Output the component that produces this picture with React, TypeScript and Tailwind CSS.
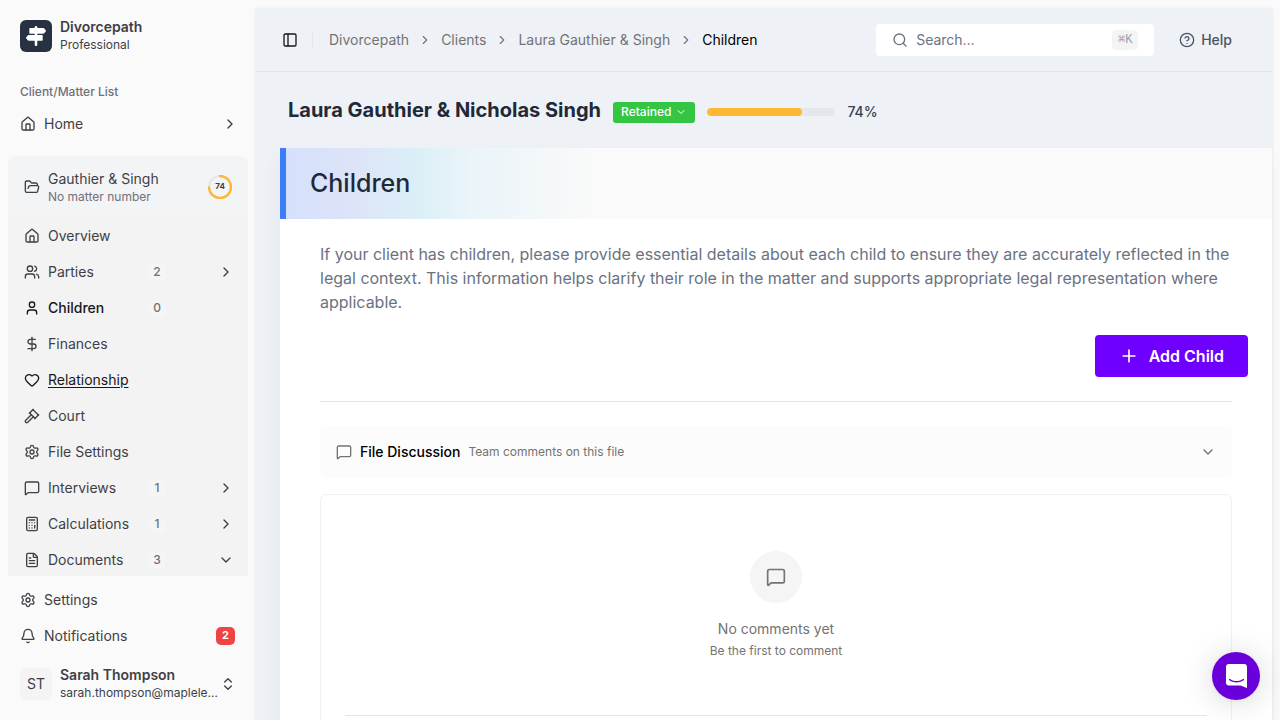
import type { ReactNode } from "react";
import {
  Bell,
  Calculator,
  ChevronDown,
  ChevronRight,
  ChevronsUpDown,
  CircleHelp,
  DollarSign,
  FileText,
  FolderOpen,
  Gavel,
  Heart,
  House,
  MessageSquare,
  PanelLeft,
  Plus,
  Search,
  Settings,
  User,
  Users,
  type LucideIcon,
} from "lucide-react";

type MatterItem = {
  label: string;
  icon: LucideIcon;
  count?: number;
  chevron?: "right" | "down";
  tone?: string;
};

const matterItems: MatterItem[] = [
  { label: "Overview", icon: House },
  { label: "Parties", icon: Users, count: 2, chevron: "right" },
  { label: "Children", icon: User, count: 0, tone: "font-medium text-zinc-900" },
  { label: "Finances", icon: DollarSign },
  { label: "Relationship", icon: Heart, tone: "text-zinc-900 underline underline-offset-2" },
  { label: "Court", icon: Gavel },
  { label: "File Settings", icon: Settings },
  { label: "Interviews", icon: MessageSquare, count: 1, chevron: "right" },
  { label: "Calculations", icon: Calculator, count: 1, chevron: "right" },
  { label: "Documents", icon: FileText, count: 3, chevron: "down" },
];

function SignpostLogo() {
  return (
    <svg viewBox="0 0 20 20" className="size-5" fill="#fff" aria-hidden="true">
      <rect x="8.7" y="0" width="2.6" height="20" rx="1.3" />
      <path d="M4.3 2h12.9c.4 0 .7.1 1 .4l1.5 1.8c.3.4.3.9 0 1.3l-1.5 1.8c-.3.3-.6.5-1 .5H4.3c-.6 0-1-.4-1-1V3c0-.6.4-1 1-1z" />
      <path d="M15.7 9H2.8c-.4 0-.7.1-1 .4L.3 11.200c-.3.4-.3.9 0 1.300l1.500 1.800c.3.3.6.5 1 .5h12.900c.6 0 1-.4 1-1V10c0-.6-.4-1-1-1z" />
    </svg>
  );
}

function MatterLink({ item }: { item: MatterItem }) {
  const Icon = item.icon;
  const Chevron = item.chevron === "down" ? ChevronDown : ChevronRight;
  return (
    <li>
      <a
        href="#"
        className={`flex h-9 items-center gap-2 pr-3.5 pl-4 text-sm ${item.tone ?? "text-zinc-700"}`}
      >
        <Icon className="size-4 shrink-0" />
        <span className="w-[91px] shrink-0 whitespace-nowrap">{item.label}</span>
        {item.count !== undefined && (
          <span className="flex h-[19px] w-5 items-center justify-center rounded-md border border-[#f1f2f8] bg-[#f5f5f5] text-xs font-medium text-zinc-500">
            {item.count}
          </span>
        )}
        {item.chevron && <Chevron className="ml-auto size-4" />}
      </a>
    </li>
  );
}

function ProgressRing({ value }: { value: number }) {
  const length = 2 * Math.PI * 11;
  return (
    <svg viewBox="0 0 24 24" className="size-6" role="img" aria-label={`${value}% complete`}>
      <circle cx="12" cy="12" r="11" fill="none" stroke="#e5e7eb" strokeWidth="2" />
      <circle
        cx="12"
        cy="12"
        r="11"
        fill="none"
        stroke="#fdb733"
        strokeWidth="2.4"
        strokeLinecap="round"
        strokeDasharray={`${(length * value) / 100} ${length}`}
        transform="rotate(-90 12 12)"
      />
      <text x="12" y="14.2" textAnchor="middle" fontSize="8" fontWeight="700" fill="#374151">
        {value}
      </text>
    </svg>
  );
}

function Sidebar() {
  return (
    <aside className="flex w-64 shrink-0 flex-col px-2 text-zinc-700">
      <a href="#" className="flex items-center gap-2 px-3 pt-[18px] pb-[26px]">
        <span className="flex size-8 items-center justify-center rounded-md bg-[#273142]">
          <SignpostLogo />
        </span>
        <span className="flex flex-col">
          <span className="text-sm leading-[18px] font-semibold">Divorcepath</span>
          <span className="text-xs leading-[18px]">Professional</span>
        </span>
      </a>
      <div className="px-3 pt-0.5 text-xs leading-5 font-medium text-zinc-500">Client/Matter List</div>
      <a href="#" className="mt-1 flex h-9 items-center gap-2 pr-2.5 pl-3 text-sm">
        <House className="size-4" />
        Home
        <ChevronRight className="ml-auto size-4" />
      </a>
      <nav className="mt-3.5 min-h-0 flex-1 overflow-hidden rounded-t-lg bg-[#f3f3f3]">
        <a href="#" className="flex h-[62px] items-center gap-2 rounded-t-lg bg-[#f3f4f5] px-4">
          <FolderOpen className="size-4" />
          <span className="flex flex-1 flex-col pt-0.5">
            <span className="text-sm leading-[18px]">Gauthier &amp; Singh</span>
            <span className="text-xs leading-[18px] text-zinc-500">No matter number</span>
          </span>
          <ProgressRing value={74} />
        </a>
        <ul>
          {matterItems.map((item) => (
            <MatterLink key={item.label} item={item} />
          ))}
        </ul>
      </nav>
      <div className="pt-1.5 pb-3 text-sm">
        <a href="#" className="flex h-9 items-center gap-2 px-3">
          <Settings className="size-4" />
          Settings
        </a>
        <a href="#" className="flex h-9 items-center gap-2 pr-[13px] pl-3">
          <Bell className="size-4" />
          Notifications
          <span className="ml-auto flex h-[18px] w-[19px] items-center justify-center rounded-[5px] bg-[#ef4444] text-[11px] font-bold text-white">
            2
          </span>
        </a>
        <button type="button" className="mt-1.5 flex h-12 w-full items-center px-3 text-left">
          <span className="mr-2 flex size-8 shrink-0 items-center justify-center rounded-md bg-[#f4f4f5]">ST</span>
          <span className="flex min-w-0 flex-1 flex-col whitespace-nowrap">
            <span className="leading-[18px] font-semibold">Sarah Thompson</span>
            <span className="text-xs leading-[18px]">sarah.thompson@maplele…</span>
          </span>
          <ChevronsUpDown className="size-4 shrink-0" />
        </button>
      </div>
    </aside>
  );
}

function Crumb({ children }: { children: ReactNode }) {
  return (
    <li className="flex items-center gap-[9px]">
      <a href="#">{children}</a>
      <ChevronRight className="size-3.5" />
    </li>
  );
}

function Header() {
  return (
    <header className="flex h-16 shrink-0 items-center border-b border-[#e2e5ea] pr-10 pl-[26px]">
      <button type="button" aria-label="Toggle sidebar" className="text-zinc-900">
        <PanelLeft className="size-4" />
      </button>
      <span className="mr-4 ml-3.5 h-4 w-px bg-[#e2e5ea]" />
      <nav aria-label="Breadcrumb">
        <ol className="flex items-center gap-[9px] text-sm whitespace-nowrap text-[#737373]">
          <Crumb>Divorcepath</Crumb>
          <Crumb>Clients</Crumb>
          <Crumb>Laura Gauthier &amp; Singh</Crumb>
          <li className="text-black">Children</li>
        </ol>
      </nav>
      <label className="ml-auto flex h-8 w-[278px] items-center gap-2 rounded bg-white px-4 text-gray-500">
        <Search className="size-4 shrink-0" />
        <input
          type="text"
          aria-label="Search"
          placeholder="Search…"
          className="min-w-0 flex-1 text-sm outline-none placeholder:text-gray-500"
        />
        <kbd className="flex h-5 w-[26px] items-center justify-center rounded bg-gray-100 font-['Liberation_Mono','DejaVu_Sans_Mono',monospace] text-xs text-gray-400">
          ⌘K
        </kbd>
      </label>
      <button type="button" className="ml-[25px] flex items-center gap-1.5 text-sm font-medium text-gray-600">
        <CircleHelp className="size-4" />
        Help
      </button>
    </header>
  );
}

function MatterBar() {
  return (
    <div className="flex h-[76px] shrink-0 items-center pt-1 pl-8">
      <h1 className="mr-3 pb-1 text-xl font-bold text-gray-800">Laura Gauthier &amp; Nicholas Singh</h1>
      <button
        type="button"
        className="mr-3 flex h-[21px] items-center gap-1 rounded-[3px] bg-[#34c543] px-2 text-xs font-medium text-white"
      >
        Retained
        <ChevronDown className="size-3" />
      </button>
      <div className="mr-3 h-2 w-32 overflow-hidden rounded-full bg-gray-200">
        <div className="h-full rounded-full bg-[#fdb733]" style={{ width: "74%" }} />
      </div>
      <span className="text-sm font-medium text-gray-700">74%</span>
    </div>
  );
}

function Discussion() {
  return (
    <>
      <button
        type="button"
        className="mt-6 flex h-[52px] w-full items-center gap-2 rounded-md bg-[#fcfcfc] px-4 text-[#737373]"
      >
        <MessageSquare className="size-4" />
        <span className="text-sm font-medium text-black">File Discussion</span>
        <span className="text-xs">Team comments on this file</span>
        <ChevronDown className="ml-auto size-4" />
      </button>
      <section className="mt-4 rounded-md border border-[#f0f1f8] px-6">
        <div className="flex flex-col items-center pt-14 pb-14 text-[#737373]">
          <span className="flex size-[52px] items-center justify-center rounded-full bg-[#f5f5f5]">
            <MessageSquare className="size-5" />
          </span>
          <p className="mt-4 text-sm">No comments yet</p>
          <p className="mt-1 text-xs">Be the first to comment</p>
        </div>
        <div className="h-40 border-t border-[#e4e4e7]" />
      </section>
    </>
  );
}

export default function App() {
  return (
    <div className="flex h-screen overflow-hidden bg-[#fafafa] font-[Inter,'Liberation_Sans',sans-serif]">
      <Sidebar />
      <main className="mt-2 mr-2 flex min-w-0 flex-1 flex-col bg-[#eef1f6] shadow-sm">
        <Header />
        <MatterBar />
        <div className="ml-6 min-h-0 flex-1">
          <div className="h-full overflow-hidden bg-white shadow-[-2px_12px_16px_rgba(100,116,139,0.08)]">
            <div className="flex h-[71px] items-center border-l-6 border-[#3b7ff8] bg-[linear-gradient(90deg,#d5e0fb_0px,#dde4f8_69px,#dbeff7_130px,#eaf4f9_185px,#fafafa_310px)] pl-6">
              <h2 className="text-[25px] font-medium text-gray-800">Children</h2>
            </div>
            <div className="px-10 pt-[23px]">
              <p className="text-base leading-6 text-gray-500">
                If your client has children, please provide essential details about each child to ensure they are
                accurately reflected in the legal context. This information helps clarify their role in the matter and
                supports appropriate legal representation where applicable.
              </p>
              <div className="-mr-4 mt-[21px] flex justify-end">
                <button
                  type="button"
                  className="flex h-[42px] items-center gap-2.5 rounded bg-[#6f00ff] px-6 text-base font-semibold text-white"
                >
                  <Plus className="size-5" />
                  Add Child
                </button>
              </div>
              <hr className="mt-6 border-[#e2e2e5]" />
              <Discussion />
            </div>
          </div>
        </div>
      </main>
      <button
        type="button"
        aria-label="Open chat"
        className="fixed right-5 bottom-5 flex size-12 items-center justify-center rounded-full bg-[#6a00d9] shadow-[0_1px_6px_rgba(0,0,0,0.06),0_2px_32px_rgba(0,0,0,0.16)]"
      >
        <svg viewBox="0 0 28 32" className="h-6 w-[21px]">
          <path
            fill="#fff"
            d="M28 32s-4.714-1.855-8.527-3.34H3.437C1.54 28.66 0 27.026 0 25.013V3.644C0 1.633 1.54 0 3.437 0h21.125c1.898 0 3.437 1.632 3.437 3.645v18.404H28V32zm-4.139-11.982a.88.88 0 00-1.292-.105c-.03.026-3.015 2.681-8.57 2.681-5.486 0-8.517-2.636-8.571-2.684a.88.88 0 00-1.29.107 1.01 1.01 0 00-.219.708.992.992 0 00.318.664c.142.128 3.537 3.15 9.762 3.15 6.226 0 9.621-3.022 9.763-3.15a.992.992 0 00.317-.664 1.01 1.01 0 00-.218-.707z"
          />
        </svg>
      </button>
    </div>
  );
}
